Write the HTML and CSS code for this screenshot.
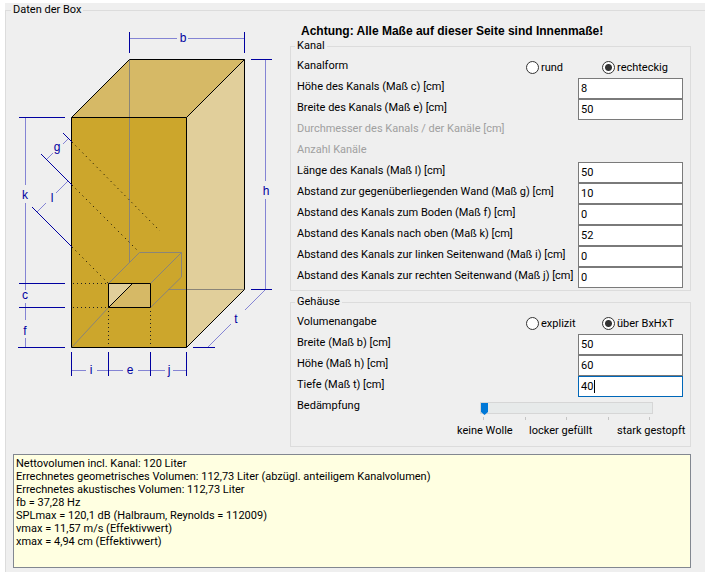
FILE: index.html
```html
<!DOCTYPE html>
<html lang="de">
<head>
  <meta charset="UTF-8">
  <meta name="viewport" content="width=device-width, initial-scale=1.0">
  <title>Daten der Box</title>
  <link rel="stylesheet" href="styles.css">
</head>
<body>
  <form class="page">
    <fieldset class="box-data">
      <legend>Daten der Box</legend>

      <div class="columns">
        <svg class="drawing" width="262" height="362" viewBox="13 24 262 362" role="img" aria-label="Maße der Box">
          <!-- box faces -->
          <polygon fill="#d6b966" points="71.5,117.5 129.5,59.5 244.5,59.5 186.5,117.5"/>
          <polygon fill="#e1cf9b" points="186.5,117.5 244.5,59.5 244.5,289.5 186.5,347.5"/>
          <rect fill="#cca62c" x="71.5" y="117.5" width="115" height="230"/>
          <rect fill="#d6b966" x="108.5" y="283.5" width="42" height="24"/>
          <polygon fill="#e1cf9b" points="108.5,283.5 132.5,283.5 108.5,307.5"/>
          <!-- hidden edges -->
          <path class="hidden-edge" d="M129.5 60V262 M168 289.5H244 M72 347L108 308 M108.5 283.5L139.5 252.5H181.5V277L150.5 307.5 M150.5 283.5L181.5 252.5"/>
          <!-- visible edges -->
          <path class="edge" d="M71.5 117.5H186.5V347.5H71.5Z M108.5 283.5H150.5V307.5H108.5Z M129.5 59.5H244.5V289.5"/>
          <path class="edge" d="M71.5 117.5L129.5 59.5 M186.5 117.5L244.5 59.5 M186.5 347.5L244.5 289.5 M108.5 307.5L132.5 283.5"/>
          <path class="dots" d="M73 283.5H108 M73 307.5H108 M108.5 311V347 M150.5 311V347"/>
          <path class="dots-slant" d="M72 142L160 231 M72 185L139 252 M72 247L108 283"/>
          <!-- measuring lines -->
          <path class="measure" d="M130 38.5H177 M188 38.5H244 M265.5 60V181 M265.5 199V289 M25.5 118V185 M25.5 203V290 M25.5 303V320 M25.5 338V347 M72 370.5H86 M97 370.5H123 M138 370.5H165 M173 370.5H186 M265 290L245 310 M231 324L208 347 M69 138L63 144 M53 153L46 160 M68 181L56 193 M46 203L37 212"/>
          <path class="tick" d="M129.5 32V53 M244.5 32V53 M251 59.5H272 M251 289.5H272 M193 347.5H215 M19 117.5H65 M19 283.5H65 M19 307.5H65 M18 347.5H65 M71.5 352V376 M108.5 352V376 M150.5 352V376 M186.5 352V376 M63 133L72 142 M41 154L72 185 M32 207L72 247"/>
          <g class="letters">
            <text x="183" y="42">b</text>
            <text x="266" y="195">h</text>
            <text x="25" y="199">k</text>
            <text x="57" y="151">g</text>
            <text x="52" y="202">l</text>
            <text x="25" y="299">c</text>
            <text x="25" y="335">f</text>
            <text x="236" y="323">t</text>
            <text x="91" y="374">i</text>
            <text x="130" y="374">e</text>
            <text x="169" y="374">j</text>
          </g>
        </svg>

        <div class="settings">
          <h1>Achtung: Alle Maße auf dieser Seite sind Innenmaße!</h1>

          <fieldset class="group">
            <legend>Kanal</legend>
            <div class="row">
              <span>Kanalform</span>
              <div class="radios">
                <label><input type="radio" name="form">rund</label>
                <label><input type="radio" name="form" checked>rechteckig</label>
              </div>
            </div>
            <div class="row"><label for="c">Höhe des Kanals (Maß c) [cm]</label><input type="text" id="c" value="8"></div>
            <div class="row"><label for="e">Breite des Kanals (Maß e) [cm]</label><input type="text" id="e" value="50"></div>
            <div class="row disabled"><span>Durchmesser des Kanals / der Kanäle [cm]</span></div>
            <div class="row disabled"><span>Anzahl Kanäle</span></div>
            <div class="row"><label for="l">Länge des Kanals (Maß l) [cm]</label><input type="text" id="l" value="50"></div>
            <div class="row"><label for="g">Abstand zur gegenüberliegenden Wand (Maß g) [cm]</label><input type="text" id="g" value="10"></div>
            <div class="row"><label for="f">Abstand des Kanals zum Boden (Maß f) [cm]</label><input type="text" id="f" value="0"></div>
            <div class="row"><label for="k">Abstand des Kanals nach oben (Maß k) [cm]</label><input type="text" id="k" value="52"></div>
            <div class="row"><label for="i">Abstand des Kanals zur linken Seitenwand (Maß i) [cm]</label><input type="text" id="i" value="0"></div>
            <div class="row"><label for="j">Abstand des Kanals zur rechten Seitenwand (Maß j) [cm]</label><input type="text" id="j" value="0"></div>
          </fieldset>

          <fieldset class="group">
            <legend>Gehäuse</legend>
            <div class="row">
              <span>Volumenangabe</span>
              <div class="radios">
                <label><input type="radio" name="volume">explizit</label>
                <label><input type="radio" name="volume" checked>über BxHxT</label>
              </div>
            </div>
            <div class="row"><label for="b">Breite (Maß b) [cm]</label><input type="text" id="b" value="50"></div>
            <div class="row"><label for="h">Höhe (Maß h) [cm]</label><input type="text" id="h" value="60"></div>
            <div class="row"><label for="t">Tiefe (Maß t) [cm]</label><input type="text" class="caret" id="t" value="40"></div>
            <div class="row damping">
              <label for="damping">Bedämpfung</label>
              <div class="slider">
                <input type="range" id="damping" min="0" max="4" value="0">
                <div class="ticks"><i></i><i></i><i></i><i></i><i></i></div>
                <div class="scale"><span>keine Wolle</span><span>locker gefüllt</span><span>stark gestopft</span></div>
              </div>
            </div>
          </fieldset>
        </div>
      </div>

      <textarea class="results" aria-label="Ergebnis" readonly>Nettovolumen incl. Kanal: 120 Liter
Errechnetes geometrisches Volumen: 112,73 Liter (abzügl. anteiligem Kanalvolumen)
Errechnetes akustisches Volumen: 112,73 Liter
fb = 37,28 Hz
SPLmax = 120,1 dB (Halbraum, Reynolds = 112009)
vmax = 11,57 m/s (Effektivwert)
xmax = 4,94 cm (Effektivwert)</textarea>
    </fieldset>
  </form>
  <script>
    const depth = document.getElementById('t');
    depth.focus();
    depth.setSelectionRange(2, 2);
    depth.addEventListener('keydown', () => depth.classList.remove('caret'));
    depth.addEventListener('blur', () => depth.classList.remove('caret'));
  </script>
</body>
</html>
```
FILE: styles.css
```css
* {
  box-sizing: border-box;
}
body {
  margin: 0;
  padding: 3px 0 0 5px;
  background: #fff;
  color: #000;
  font: 11px/14px Tahoma, Roboto, sans-serif;
}
.page {
  min-height: calc(100vh - 3px);
  background: #efefef;
  display: flex;
}
fieldset {
  min-width: 0;
  margin: 0;
  border: 1px solid #dcdcdc;
}
legend {
  padding: 0 2px;
  margin-left: -2px;
}
.box-data {
  flex: 1;
  padding: 7px 14px 4px 7px;
  border-width: 1px 0 0 1px;
}
.columns {
  display: grid;
  grid-template-columns: 277px 1fr;
}
h1 {
  margin: 0 0 0 11px;
  font: bold 12px/15px "Liberation Sans", Arial, sans-serif;
}
.group {
  padding: 4px 7px 2px 6px;
}
.group + .group {
  margin-top: 4px;
}
.row {
  display: flex;
  justify-content: space-between;
  height: 21px;
  line-height: 18px;
  white-space: nowrap;
}
.disabled {
  color: #a0a0a0;
}
.row input[type="text"] {
  width: 105px;
  height: 21px;
  padding: 0 2px;
  border: 1px solid #7a7a7a;
  border-radius: 0;
  background: #fff;
  font: inherit;
}
.row input[type="text"]:focus {
  outline: none;
  border-color: #0067b8;
}
.row input.caret {
  background: linear-gradient(#000, #000) 15px 3px / 1px 13px no-repeat #fff;
  caret-color: transparent;
}
.radios {
  display: grid;
  grid-template-columns: 76px 81px;
}
.radios label {
  display: flex;
  align-items: center;
  gap: 2px;
}
.radios input {
  appearance: none;
  flex: none;
  width: 13px;
  height: 13px;
  margin: 0;
  border: 1px solid #333;
  border-radius: 50%;
  background: #fff;
}
.radios input:checked {
  background: radial-gradient(circle, #333 3px, #fff 4px);
}
.damping {
  height: auto;
  padding-bottom: 5px;
}
.slider {
  width: 229px;
  margin: 4px -3px 0 0;
  line-height: 17px;
}
.slider input {
  appearance: none;
  display: block;
  width: 173px;
  height: 14px;
  margin: 0 0 0 23px;
  background: none;
}
.slider input::-webkit-slider-runnable-track {
  height: 12px;
  border: 1px solid #d6d6d6;
  background: #e7eaea;
}
.slider input::-webkit-slider-thumb {
  appearance: none;
  width: 7px;
  height: 12px;
  background: #0078d7;
  clip-path: polygon(0 0, 100% 0, 100% 75%, 50% 100%, 0 75%);
}
.ticks {
  display: flex;
  justify-content: space-between;
  width: 167px;
  margin: 2px 0 2px 26px;
}
.ticks i {
  width: 1px;
  height: 3px;
  background: #c4c4c4;
}
.scale {
  display: grid;
  grid-template-columns: 72px 88px 69px;
}
.results {
  display: block;
  width: 100%;
  height: 114px;
  margin-top: 7px;
  padding: 2px;
  border: 1px solid #828790;
  border-radius: 0;
  background: #ffffe1;
  color: #000;
  font: inherit;
  line-height: 13px;
  resize: none;
  outline: none;
}
.drawing {
  display: block;
}
.edge, .hidden-edge, .dots, .dots-slant, .tick, .measure {
  fill: none;
  stroke-width: 1;
}
.edge {
  stroke: #000;
}
.hidden-edge {
  stroke: #8a8578;
}
.dots, .dots-slant {
  stroke: #222;
  stroke-dasharray: 1 3;
}
.dots-slant {
  stroke: #000;
  stroke-dasharray: 1 4;
}
.tick {
  stroke: #0000a0;
}
.measure {
  stroke: #8484d4;
}
.letters {
  fill: #0000a0;
  font: 12px "Liberation Sans", Arial, sans-serif;
  text-anchor: middle;
}
```
